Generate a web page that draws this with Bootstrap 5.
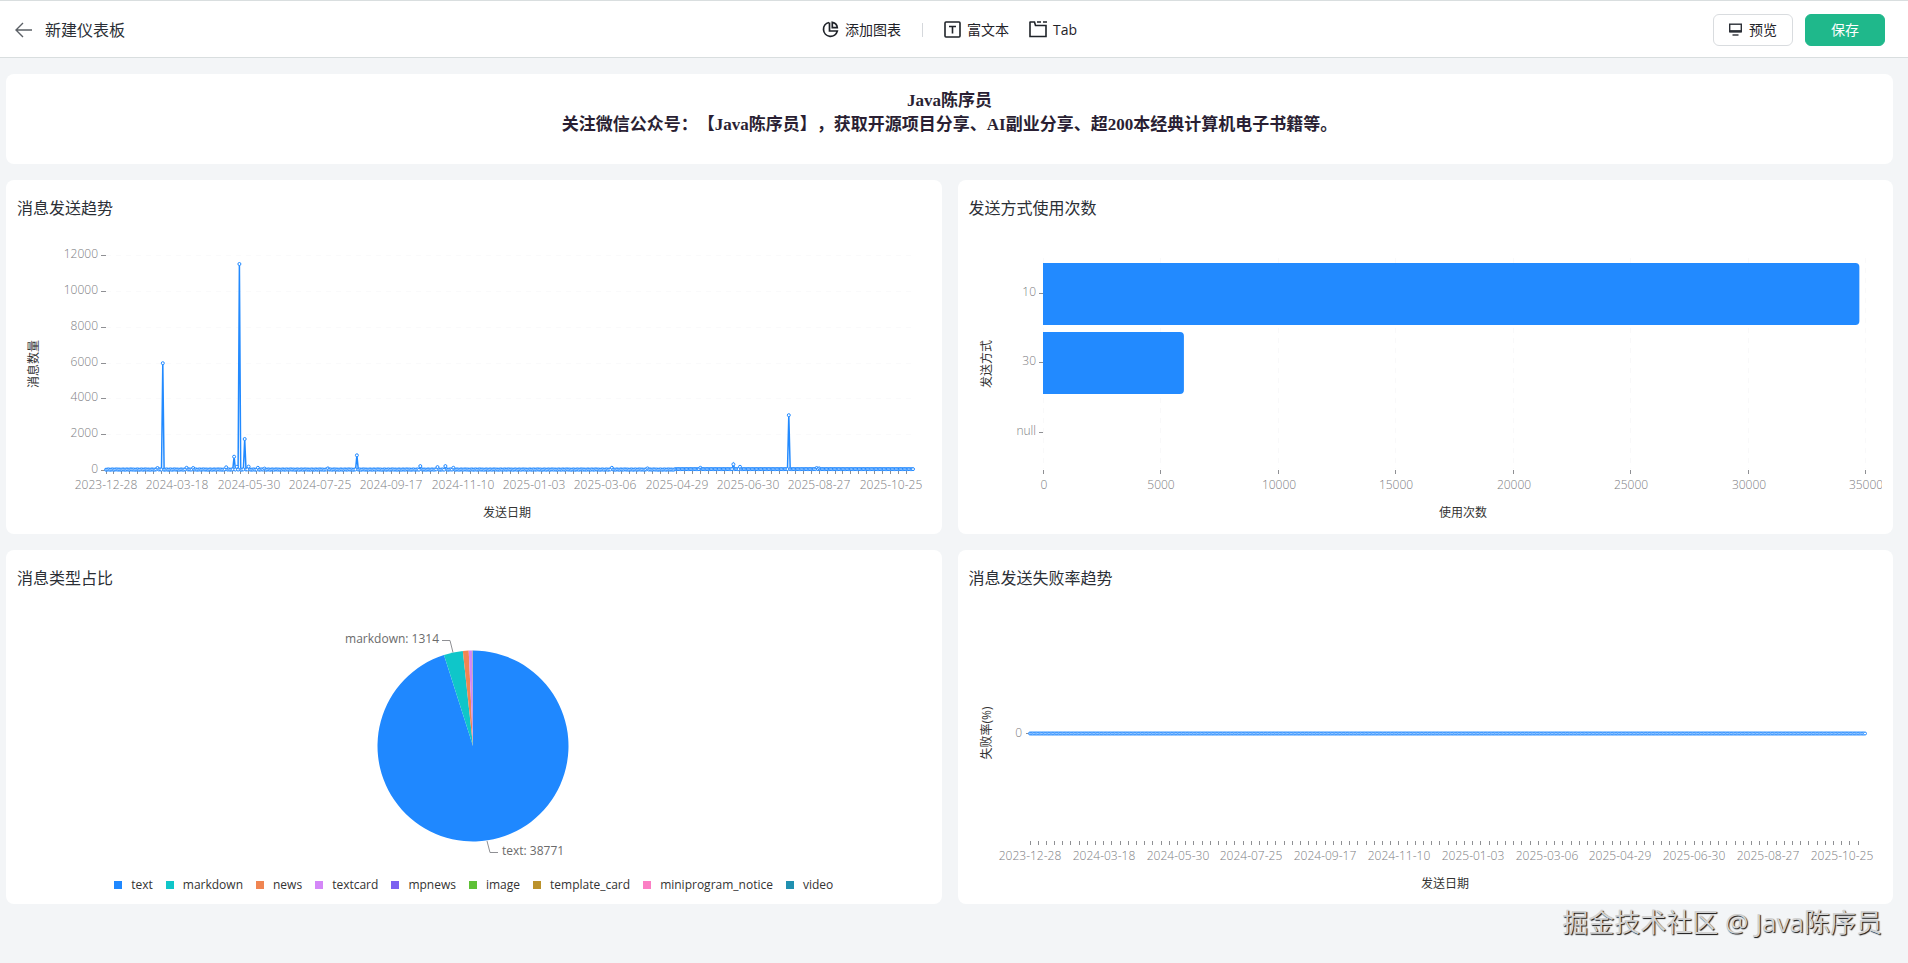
<!DOCTYPE html>
<html lang="zh-CN">
<head>
<meta charset="utf-8">
<meta name="viewport" content="width=device-width, initial-scale=1">
<title>新建仪表板</title>
<link rel="stylesheet" href="https://cdn.jsdelivr.net/npm/bootstrap@5.3.0/dist/css/bootstrap.min.css">
<style>
  body { background: #f3f5f7; color: #1f2329; font-family: "Open Sans", "Noto Sans CJK SC", sans-serif; font-weight: 400; font-size: 14px; line-height: 24px; }
  .topbar { display: grid; grid-template-columns: 1fr auto 1fr; align-items: center; height: 58px; padding: 1px 23px 0 14px; background: #fff; border-top: 1px solid #d9dedf; border-bottom: 1px solid #d9dedf; }
  .topbar svg { flex: none; }
  .back { margin-right: 13px; }
  .page-title { font-size: 16px; line-height: 26px; font-weight: 400; color: #2b2f36; }
  .tool { border: 0; background: none; padding: 0; display: flex; align-items: center; gap: 6px; color: #1f2329; }
  .tool-sep { width: 1px; height: 14px; background: #d5d8dc; margin: 0 21px; }
  .tool-text { margin-right: 20px; }
  .action { width: 80px; height: 32px; padding: 0; border-radius: 6px; font-size: 14px; line-height: 24px; display: flex; align-items: center; justify-content: center; gap: 7px; }
  .action-plain { background: #fff; border: 1px solid #d9dcdf; color: #1f2329; }
  .action-save { background: #1fb88b; border: 1px solid #1fb88b; color: #fff; }
  .board { padding: 16px 15px 0 6px; }
  .panel { background: #fff; border-radius: 8px; }
  .notice { height: 90px; padding-top: 15px; font: 700 17px/24px "Liberation Serif", "Noto Sans CJK SC", serif; color: #2a1f33; text-spacing-trim: space-all; }
  .panels { display: grid; grid-template-columns: 1fr 1fr; gap: 16px; }
  .tile { padding: 17px 11px 0; height: 354px; min-width: 0; }
  .tile h2 { font-size: 16px; line-height: 22px; font-weight: 400; margin: 0; color: #2b2f36; }
  .plot { height: 302px; min-width: 0; }
  .plot svg { display: block; width: 100%; height: 100%; overflow: hidden; }
  .plot text { font-size: 12px; font-weight: 300; fill: #7c7d82; }
  .plot text.axis-name { fill: #333; font-weight: 400; }
  .plot text.slice-label { fill: #6b6b6b; font-weight: 400; }
  .plot-pie { height: 284px; }
  .legend-row { font-size: 12px; line-height: 24px; color: #333; gap: 13px; }
  .legend-item { gap: 9px; }
  .legend-key { width: 8px; height: 8px; }
  .credit { padding-right: 10px; font-size: 26px; line-height: 36px; color: #d2d2d2; text-shadow: 1px 1px 1px #111; }
</style>
</head>
<body class="min-vh-100">
<header class="topbar">
  <div class="d-flex align-items-center">
    <a href="#" aria-label="返回" class="back d-flex"><svg width="18" height="16" viewBox="0 0 18 16" fill="none" stroke="#5b6066" stroke-width="1.4"><path d="M18 8H2M9 1L2 8l7 7"/></svg></a>
    <h1 class="page-title m-0">新建仪表板</h1>
  </div>
  <div class="d-flex align-items-center">
    <button type="button" class="tool"><svg width="17" height="17" viewBox="0 0 17 17" fill="none" stroke="#1f2329" stroke-width="1.7"><path d="M7 1.5A7 7 0 1 0 15.3 10H7.5V1.5"/><path d="M10.3 1.3V6.7H15.3A6 6 0 0 0 10.3 1.3Z"/></svg>添加图表</button>
    <span class="tool-sep"></span>
    <button type="button" class="tool tool-text"><svg width="17" height="17" viewBox="0 0 17 17" fill="none" stroke="#1f2329" stroke-width="1.6"><rect x="1" y="1" width="15" height="15" rx="1"/><path d="M5 5.5h7M8.500 5.500V12.500"/></svg>富文本</button>
    <button type="button" class="tool"><svg width="18" height="17" viewBox="0 0 18 17" fill="none" stroke="#1f2329" stroke-width="1.6"><path d="M1 1V15.500H17V4.500H6.500L5.500 1H0.500"/><path d="M8 1h4M14 1h4"/></svg>Tab</button>
  </div>
  <div class="d-flex justify-content-end gap-2">
    <button type="button" class="action action-plain me-1"><svg width="13" height="13" viewBox="0 0 13 13" fill="none" stroke="#2b2f36"><rect x=".7" y="1.200" width="11.600" height="7.600" stroke-width="1.4"/><path d="M1 8.200H12" stroke-width="2.200"/><path d="M3.500 12H9.500" stroke-width="1.400"/></svg>预览</button>
    <button type="button" class="action action-save">保存</button>
  </div>
</header>

<main class="board">
  <section class="panel notice text-center mb-3">
    <div>Java陈序员</div>
    <div>关注微信公众号：【Java陈序员】，获取开源项目分享、AI副业分享、超200本经典计算机电子书籍等。</div>
  </section>
  <div class="panels">
    <section class="panel tile"><h2>消息发送趋势</h2><div class="plot" id="trend"></div></section>
    <section class="panel tile"><h2>发送方式使用次数</h2><div class="plot" id="methods"></div></section>
    <section class="panel tile"><h2>消息类型占比</h2><div class="plot plot-pie" id="types"></div>
      <div class="legend-row d-flex justify-content-center" id="legend"></div></section>
    <section class="panel tile"><h2>消息发送失败率趋势</h2><div class="plot" id="failures"></div></section>
  </div>
</main>
<footer class="credit text-end me-3">掘金技术社区 @ Java陈序员</footer>

<script src="https://cdn.jsdelivr.net/npm/bootstrap@5.3.0/dist/js/bootstrap.bundle.min.js"></script>
<script>
  const BLUE = '#228aff';
  const DATES = ['2023-12-28','2024-03-18','2024-05-30','2024-07-25','2024-09-17','2024-11-10','2025-01-03','2025-03-06','2025-04-29','2025-06-30','2025-08-27','2025-10-25'];
  const COUNT = 612, PER_TICK = 6, PER_LABEL = 54;

  const text = (x, y, s, anchor = 'middle', cls = '') =>
    `<text x="${Math.round(x)}" y="${Math.round(y) + 4}" text-anchor="${anchor}" class="${cls}">${s}</text>`;
  const vertical = (x, y, s) =>
    `<text class="axis-name" text-anchor="middle" transform="translate(${x + 4} ${y}) rotate(-90)">${s}</text>`;
  const hline = (x1, x2, y, c = '#8f9094', d = '') => `<path d="M${x1} ${y}H${x2}" stroke="${c}" stroke-dasharray="${d}"/>`;
  const vline = (x, y1, y2, c = '#8f9094', d = '') => `<path d="M${Math.round(x) + .5} ${y1}V${y2}" stroke="${c}" stroke-dasharray="${d}"/>`;

  function draw(id, body) {
    const host = document.getElementById(id);
    host.innerHTML = `<svg role="img">${body(host.clientWidth)}</svg>`;
  }
  function dateAxis(left, right, y) {
    const step = (right - left) / (COUNT - 1);
    let out = '';
    for (let i = 0; i <= 606; i += PER_TICK) out += vline(left + i * step - .5, y, y + 4);
    DATES.forEach((d, i) => out += text(left + i * PER_LABEL * step, y + 15, d));
    return out;
  }
  function series(left, right, yOf, values) {
    const step = (right - left) / (COUNT - 1);
    let line = '', dots = '';
    values.forEach((v, i) => {
      const x = (left + i * step).toFixed(1), y = yOf(v).toFixed(1);
      line += (i ? 'L' : 'M') + x + ' ' + y;
      dots += `<circle cx="${x}" cy="${y}" r="1.5"/>`;
    });
    return `<path d="${line}" fill="none" stroke="${BLUE}" stroke-width="1.5"/><g fill="#fff" stroke="${BLUE}">${dots}</g>`;
  }

  const sent = Array.from({ length: COUNT }, (_, i) => i > 430 ? 50 : 15 + (i * 37 % 11) * 2);
  Object.entries({ 39: 110, 43: 5960, 61: 120, 66: 110, 91: 150, 97: 740, 99: 180, 101: 11500, 105: 1730, 108: 190, 115: 120, 120: 80, 168: 90,
    190: 820, 238: 220, 251: 160, 257: 220, 263: 120, 383: 120, 410: 90, 450: 120, 475: 320, 480: 180, 517: 3060, 538: 110, 540: 90 })
    .forEach(([i, v]) => sent[i] = v);

  function trend(w) {
    const left = 89, right = w - 18, yOf = v => 251 - v * 215 / 12000;
    let out = '';
    for (let v = 0; v <= 12000; v += 2000) {
      const y = Math.round(yOf(v)) + .5;
      if (v) out += hline(left, right, y, '#fafafb', '5 5');
      out += hline(left - 5, left, y) + text(left - 8, y - 2, v, 'end');
    }
    return out + dateAxis(left, right, 251) + series(left, right, yOf, sent)
      + text((left + right) / 2 - 3, 294, '发送日期', 'middle', 'axis-name') + vertical(17, 145, '消息数量');
  }
  function methods(w) {
    const left = 74, right = w - 18, scale = (right - left) / 35000;
    let out = '';
    for (let v = 0; v <= 35000; v += 5000) {
      const x = left + v * scale;
      out += vline(x, 39, 250, '#f9f9fa', '5 5') + vline(x, 251, 255) + text(x + 1, 266, v);
    }
    [['10', 34760, 44], ['30', 6000, 113], ['null', 0, 183]].forEach(([name, v, y]) => {
      out += hline(left - 4, left, y + 30.5) + text(left - 7, y + 29, name, 'end');
      if (v) { const e = left + v * scale; out += `<path fill="${BLUE}" d="M${left} ${y}H${e - 4}q4 0 4 4v54q0 4-4 4H${left}z"/>`; }
    });
    return out + text((left + w) / 2, 294, '使用次数', 'middle', 'axis-name') + vertical(18, 145, '发送方式');
  }
  const types = [['text', 38771, '#1f88ff'], ['markdown', 1314, '#0fc6c9'], ['news', 400, '#f08552'], ['textcard', 240, '#d487f8'],
    ['mpnews', 12, '#7b61f0'], ['image', 12, '#5ec136'], ['template_card', 10, '#bb922c'], ['miniprogram_notice', 10, '#fb7fc4'], ['video', 8, '#2190b0']];
  function pie(w) {
    const cx = Math.round(w / 2) - 1, cy = 157, r = 95.5, total = types.reduce((s, t) => s + t[1], 0);
    let a = 0, out = '';
    const at = t => `${cx + r * Math.sin(t)} ${cy - r * Math.cos(t)}`;
    types.forEach(([, v, c]) => {
      const b = a + v / total * Math.PI * 2;
      out += `<path fill="${c}" d="M${cx} ${cy}L${at(a)}A${r} ${r} 0 ${b - a > Math.PI ? 1 : 0} 1 ${at(b)}Z"/>`;
      a = b;
    });
    return out + `<path fill="none" stroke="#8f9094" d="M${cx - 31} ${cy - 105.5}h8l3 12M${cx + 14} ${cy + 95}l3 11.500h8"/>`
      + text(cx - 34, 50, 'markdown: 1314', 'end', 'slice-label') + text(cx + 29, 262, 'text: 38771', 'start', 'slice-label');
  }
  function failures(w) {
    const left = 61, right = w - 18;
    return hline(left - 4, left, 144.5) + text(left - 8, 144, 0, 'end') + dateAxis(left, right, 252)
      + series(left, right, () => 144.5, new Array(COUNT).fill(0))
      + text((left + right) / 2 - 3, 295, '发送日期', 'middle', 'axis-name') + vertical(18, 144, '失败率(%)');
  }
  document.getElementById('legend').innerHTML = types.map(([n, , c]) =>
    `<span class="legend-item d-flex align-items-center"><span class="legend-key" style="background:${c}"></span>${n}</span>`).join('');
  function render() { draw('trend', trend); draw('methods', methods); draw('types', pie); draw('failures', failures); }
  render();
  addEventListener('resize', render);
</script>
</body>
</html>
